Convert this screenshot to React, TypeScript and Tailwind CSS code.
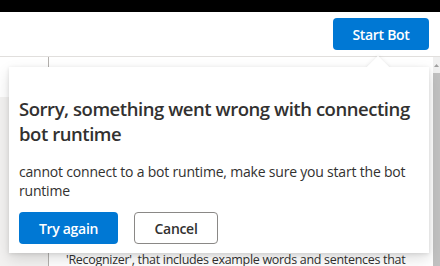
const App = () => {
  return (
    <div className="relative w-[440px] h-[266px] overflow-hidden bg-white text-[#323130] font-['Open_Sans',sans-serif]">
      <div className="h-3 bg-black" />
      <div className="h-[45px] flex justify-end items-center pr-[11px] border-b border-[#e1dfdd]">
        <button className="w-[96px] h-8 rounded-sm bg-[#0078d4] text-white text-[14px] font-semibold tracking-[-0.3px]">
          Start Bot
        </button>
      </div>
      <div className="flex h-[209px]">
        <div className="w-[49px] shrink-0 border-r border-[#b3b0ad] flex flex-col">
          <div className="h-[40px] bg-white" />
          <div className="flex-1 bg-[#f3f2f1]" />
        </div>
        <div className="flex-1 min-w-0 overflow-hidden flex flex-col justify-end pl-[17px]">
          <p className="text-[12.5px] leading-5 tracking-[-0.3px] whitespace-nowrap translate-y-[4px]">
            'Recognizer', that includes example words and sentences that
          </p>
        </div>
        <div className="w-[7px] shrink-0 flex flex-col">
          <div className="h-4 bg-[#f0f0f0] flex items-center justify-center">
            <svg width="5" height="4" viewBox="0 0 5 4">
              <path d="M0 4 L2.5 1 L5 4" fill="#a0a0a0" />
            </svg>
          </div>
          <div className="flex-1 bg-[#c1c1c1]" />
        </div>
      </div>

      <div className="absolute left-[9px] top-[67px] w-[420px] h-[186px] bg-white shadow-[0_6px_14px_rgba(0,0,0,0.13),0_1px_4px_rgba(0,0,0,0.11)]">
        <div className="absolute left-[361px] -top-[8px] w-4 h-4 rotate-45 bg-white shadow-[0_0_4px_rgba(0,0,0,0.1)]" />
        <div className="relative bg-white h-full px-[10px] pt-[29px]">
          <h2 className="text-[18.5px] leading-[25px] font-semibold tracking-[-0.45px] w-[400px]">
            Sorry, something went wrong with connecting bot runtime
          </h2>
          <p className="mt-4 text-[14px] leading-[19px] tracking-[-0.2px] w-[400px]">
            cannot connect to a bot runtime, make sure you start the bot runtime
          </p>
          <div className="flex gap-4 mt-3">
            <button className="w-[99px] h-8 rounded-sm bg-[#0078d4] text-white text-[14px] font-semibold tracking-[-0.3px]">
              Try again
            </button>
            <button className="w-[84px] h-8 rounded-sm border border-[#8a8886] bg-white text-[14px] font-semibold tracking-[-0.3px]">
              Cancel
            </button>
          </div>
        </div>
      </div>
    </div>
  )
}

export default App
